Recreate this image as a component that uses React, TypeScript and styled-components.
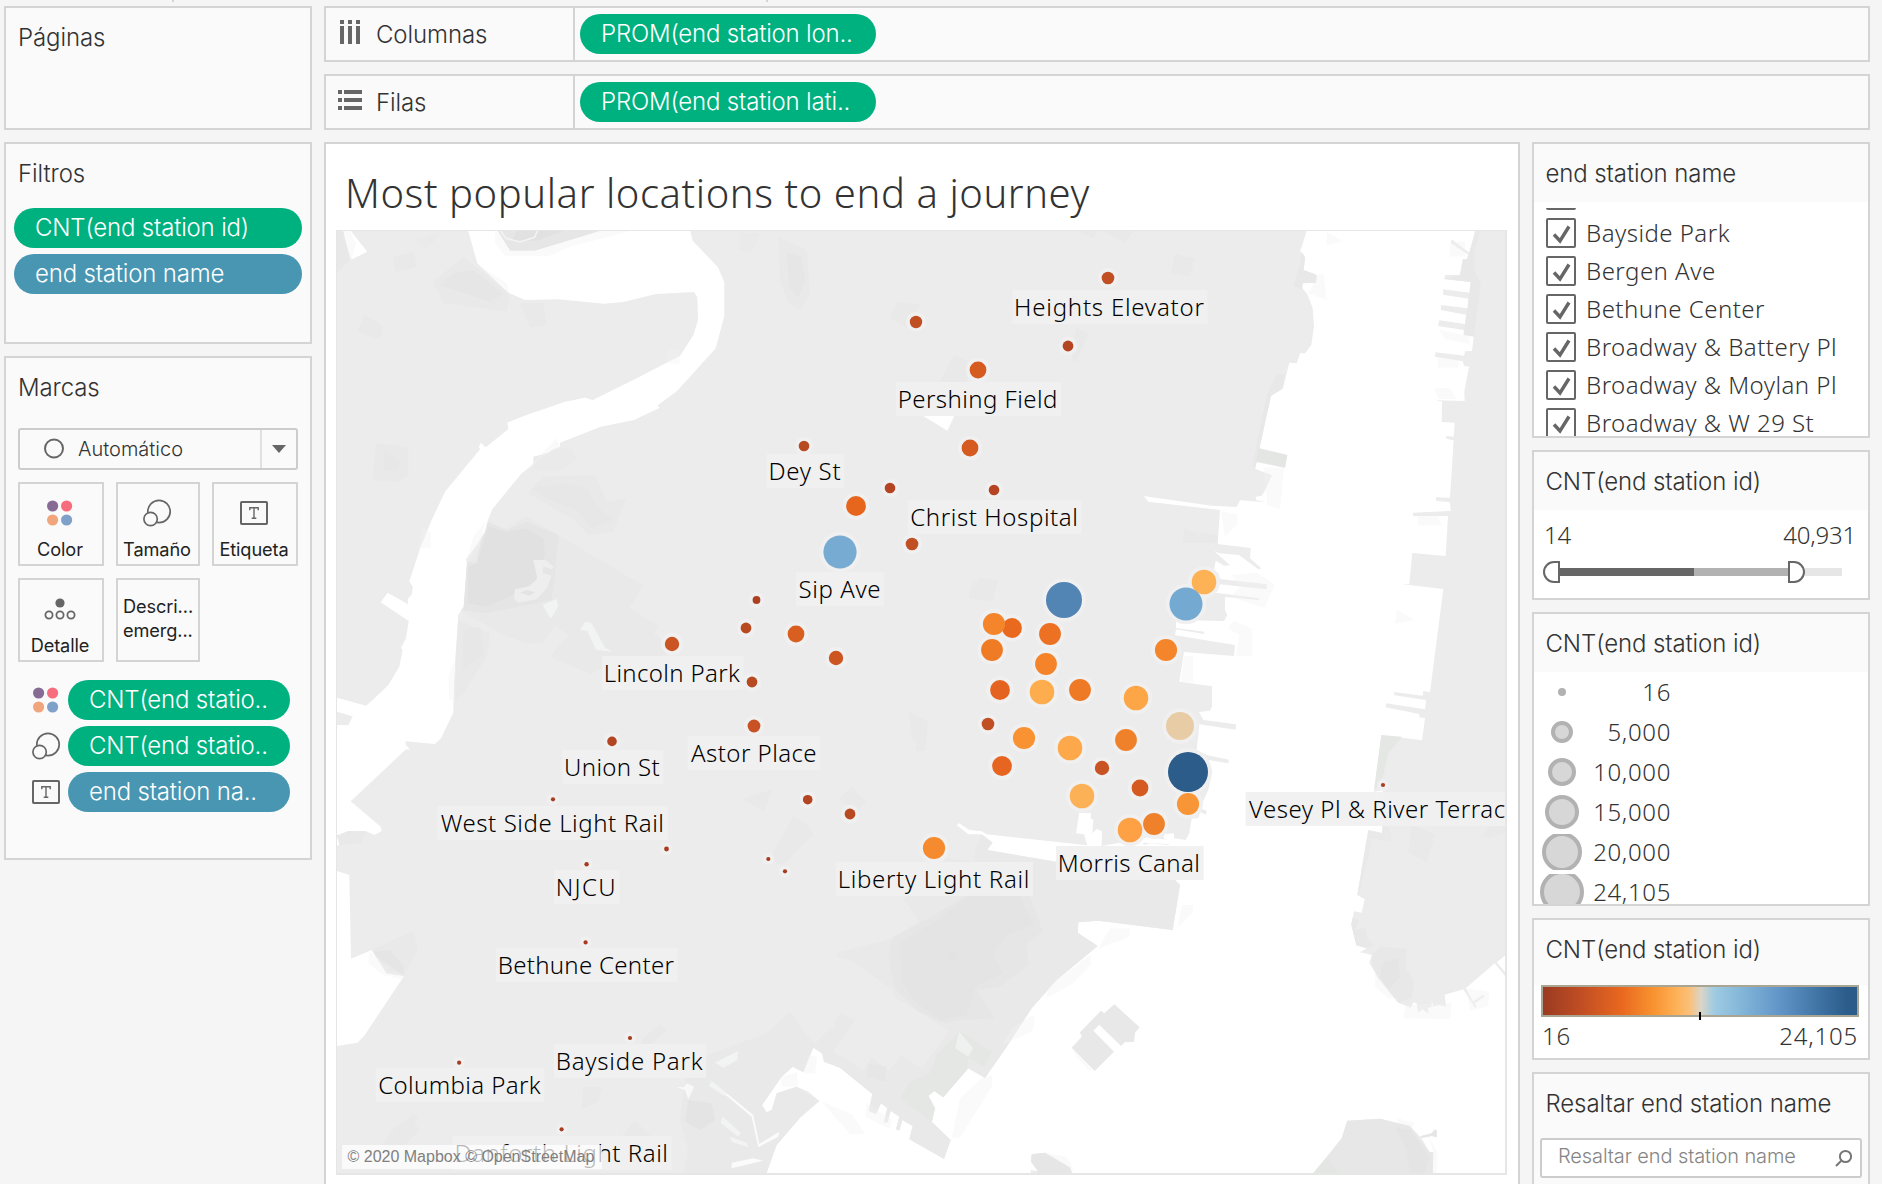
import React from "react";
import styled, { createGlobalStyle, css } from "styled-components";

const UI_FONT = `Inter, "Liberation Sans", sans-serif`;
const VIZ_FONT = `"Noto Sans", "Open Sans", sans-serif`;

const GlobalStyle = createGlobalStyle`
  *, *::before, *::after { box-sizing: border-box; }
  html, body { margin: 0; height: 100%; background: #f5f5f5; overflow: hidden; }
  body { font-family: ${UI_FONT}; font-weight: 350; font-size: 24px; line-height: 30px; color: #333; }
`;

/* ---------- layout ---------- */

const Workspace = styled.div`
  display: grid;
  grid-template-columns: 308px 1546px;
  column-gap: 12px;
  width: 1882px;
  height: 1184px;
  padding: 6px 12px 0 4px;
  overflow: hidden;
  position: relative;
`;

const SideColumn = styled.div`
  display: flex;
  flex-direction: column;
  gap: 12px;
`;

const MainColumn = styled.div`
  display: flex;
  flex-direction: column;
  gap: 12px;
  min-width: 0;
`;

const ContentRow = styled.div`
  display: flex;
  gap: 12px;
`;

const LegendColumn = styled.div`
  display: flex;
  flex-direction: column;
  gap: 12px;
  width: 338px;
`;

const RulerTick = styled.i<{ $x: number }>`
  position: absolute;
  top: 0;
  left: ${(p) => p.$x}px;
  width: 2px;
  height: 2px;
  background: #d4d4d4;
`;

const Card = styled.section<{ $h: number }>`
  flex: none;
  height: ${(p) => p.$h}px;
  border: 2px solid #d4d4d4;
  background: #fafafa;
  overflow: hidden;
`;

const CardTitle = styled.h2<{ $h?: number }>`
  margin: 0;
  height: ${(p) => p.$h ?? 58}px;
  padding: 15px 12px 0;
  font: inherit;
  letter-spacing: -0.1px;
  white-space: nowrap;
`;

const LegendTitle = styled(CardTitle)`
  padding-left: 11.5px;
`;

const LegendBody = styled.div`
  background: #fff;
  height: 100%;
  font-family: ${VIZ_FONT};
  font-weight: 325;
`;

/* ---------- pills ---------- */

const pillTone = { measure: "#00b180", dimension: "#4996b2" };

const Pill = styled.div<{ $tone: keyof typeof pillTone; $w?: number }>`
  height: 40px;
  ${(p) => (p.$w ? css`width: ${p.$w}px;` : css`flex: 1;`)}
  padding: 5px 10px 0 21px;
  border-radius: 20px;
  background: ${(p) => pillTone[p.$tone]};
  color: #fff;
  white-space: nowrap;
  letter-spacing: -0.18px;
`;

const PillStack = styled.div`
  display: flex;
  flex-direction: column;
  gap: 6px;
  padding: 6px 8px 0;
  & > ${Pill} { flex: none; }
`;

/* ---------- shelves ---------- */

const Shelf = styled(Card)`
  display: flex;
`;

const ShelfName = styled.div`
  display: flex;
  width: 249px;
  border-right: 2px solid #d4d4d4;
  padding: 11px 0 0 12px;
  gap: 12px;
  line-height: 32px;
  letter-spacing: -0.1px;
`;

const ShelfDrop = styled.div`
  padding: 6px 5px;
`;

/* ---------- marks card ---------- */

const MarkTypeSelect = styled.div`
  display: flex;
  align-items: stretch;
  width: 280px;
  height: 42px;
  margin: 12px 0 12px 12px;
  border: 2px solid #ccc;
  border-radius: 3px;
  font-size: 20px;
  line-height: 37px;
`;

const MarkTypeValue = styled.span`
  display: flex;
  flex: 1;
  gap: 13px;
  padding-left: 23px;
  align-items: center;
`;

const MarkTypeArrow = styled.span`
  display: flex;
  align-items: center;
  justify-content: center;
  width: 36px;
  border-left: 2px solid #e0e0e0;
`;

const MarkGrid = styled.div`
  display: grid;
  grid-template-columns: 86px 84px 86px;
  grid-auto-rows: 84px;
  gap: 12px;
  padding-left: 12px;
`;

const MarkButton = styled.button<{ $textOnly?: boolean }>`
  display: flex;
  flex-direction: column;
  align-items: center;
  justify-content: ${(p) => (p.$textOnly ? "center" : "flex-end")};
  padding: ${(p) => (p.$textOnly ? "0 0 4px" : "0 2px 3px 0")};
  border: 2px solid #d4d4d4;
  background: transparent;
  font-family: inherit;
  font-weight: 370;
  font-size: 18.2px;
  line-height: 24px;
  letter-spacing: -0.1px;
  text-align: left;
  color: #222;
`;

const MarkGlyph = styled.span`
  display: flex;
  align-items: center;
  justify-content: center;
  height: 42px;
  margin-bottom: 3px;
`;

const EncodingList = styled.div`
  display: flex;
  flex-direction: column;
  gap: 6px;
  padding: 18px 20px 0 22px;
`;

const Encoding = styled.div`
  display: flex;
  align-items: center;
`;

const EncodingIcon = styled.span`
  display: flex;
  justify-content: center;
  width: 36px;
  margin: 0 4px 0 0;
`;

const ColorIcon = () => (
  <svg width="36" height="28" viewBox="0 0 36 28">
    <circle cx="10.6" cy="7" r="5.6" fill="#866b95" />
    <circle cx="24.6" cy="7" r="5.6" fill="#f66e7e" />
    <circle cx="10.6" cy="21" r="5.6" fill="#f0a57d" />
    <circle cx="24.6" cy="21" r="5.6" fill="#7fa1c9" />
  </svg>
);

const SizeIcon = () => (
  <svg width="30" height="28" viewBox="0 0 30 28" fill="#fafafa" stroke="#666" strokeWidth="1.7">
    <circle cx="17" cy="12.5" r="11.2" />
    <circle cx="8.6" cy="20" r="6.7" />
  </svg>
);

const LabelIcon = () => (
  <svg width="28" height="24" viewBox="0 0 28 24" fill="none" stroke="#666" strokeWidth="2">
    <rect x="1" y="1" width="26" height="22" rx="0.8" />
    <path d="M9.8 9.2V6.8h8.4v2.4M14 6.8v10.4M11.7 17.2h4.6" strokeWidth="1.4" />
  </svg>
);

const DetailIcon = () => (
  <svg width="32" height="22" viewBox="0 0 32 22" fill="none" stroke="#666" strokeWidth="1.8">
    <circle cx="16" cy="5" r="4.6" fill="#666" stroke="none" />
    <circle cx="5" cy="17" r="3.6" />
    <circle cx="16" cy="17" r="3.6" />
    <circle cx="27" cy="17" r="3.6" />
  </svg>
);

const ColumnsIcon = () => (
  <svg width="26" height="30" viewBox="0 0 26 30" fill="#666">
    {[2, 10, 18].map((x) => (
      <path key={x} d={`M${x} 1h4v4h-4zM${x} 7h4v18h-4z`} />
    ))}
  </svg>
);

const RowsIcon = () => (
  <svg width="26" height="30" viewBox="0 0 26 30" fill="#666">
    {[3, 11, 19].map((y) => (
      <path key={y} d={`M0 ${y}h4v4h-4zM6 ${y}h18v4h-18z`} />
    ))}
  </svg>
);

/* ---------- filter list ---------- */

const CheckViewport = styled(LegendBody)`
  padding-top: 6px;
`;

const CheckScroller = styled.ul`
  display: flex;
  flex-direction: column;
  gap: 8px;
  margin: 0;
  padding: 0 0 0 12px;
  list-style: none;
  height: 228px;
  overflow: hidden;
  justify-content: flex-start;
`;

/* Lower edge of the checkbox that is scrolled out above the list. */
const ScrolledEdge = styled.li`
  flex: none;
  width: 30px;
  height: 2px;
  background: #666;
  border-radius: 0 0 2px 2px;
`;

const CheckRow = styled.li`
  display: flex;
  flex: none;
  gap: 10px;
  height: 30px;
  white-space: nowrap;
  letter-spacing: 0.47px;
  line-height: 29px;
`;

const CheckBox = styled.span`
  width: 30px;
  height: 30px;
  border: 2px solid #666;
  border-radius: 2px;
  background: #fff;
  & > svg { display: block; }
`;

/* ---------- range filter ---------- */

const RangeLabels = styled.div<{ $pad: string; $ls: number }>`
  display: flex;
  justify-content: space-between;
  padding: ${(p) => p.$pad};
  letter-spacing: ${(p) => p.$ls}px;
`;

const Slider = styled.div`
  display: flex;
  align-items: center;
  margin: 10px 0 0 9px;
  height: 24px;
`;

const Track = styled.span<{ $w: number; $c: string }>`
  width: ${(p) => p.$w}px;
  height: 8px;
  background: ${(p) => p.$c};
`;

const Thumb = styled.span<{ $side: "l" | "r" }>`
  width: 17px;
  height: 22px;
  border: 2px solid #666;
  background: #fff;
  border-radius: ${(p) => (p.$side === "l" ? "11px 0 0 11px" : "0 11px 11px 0")};
`;

/* ---------- size legend ---------- */

const SizeRow = styled.div`
  display: flex;
  height: 36px;
  margin-bottom: 4px;
  line-height: 39px;
  letter-spacing: 0.65px;
`;

const SizeSwatch = styled.svg`
  width: 56px;
  height: 36px;
  margin-top: 2px;
  flex: none;
`;

const SizeValue = styled.span`
  width: 81px;
  text-align: right;
`;

/* ---------- colour legend ---------- */

const ColorRamp = styled.div`
  position: relative;
  height: 32px;
  margin: 0 9px 0 7px;
  border: 2px solid #aaa593;
  background: linear-gradient(90deg, #9a3b22 0%, #c04d23 12%, #e9681f 25%, #f8922f 35%, #fdaf55 42%, #fbbf77 46.5%, #d9d5c9 50.5%, #9fcbe2 54.5%, #87b9da 62%, #6296c8 75%, #3f73a4 88%, #2b5c8a 97%);
`;

const RampCenter = styled.i`
  position: absolute;
  left: 156px;
  top: 25px;
  width: 2px;
  height: 8px;
  background: #000;
`;

/* ---------- highlighter ---------- */

const SearchField = styled.div`
  display: flex;
  align-items: center;
  justify-content: space-between;
  width: 322px;
  height: 40px;
  margin: 6px 0 0 6px;
  padding: 0 7px 4px 16px;
  border: 2px solid #ccc;
  border-radius: 3px;
  background: #fff;
  color: #858585;
  font-size: 20px;
  letter-spacing: -0.1px;
  & > svg { margin-top: 4px; }
`;

/* ---------- sheet ---------- */

const Sheet = styled.section`
  flex: none;
  width: 1196px;
  height: 1100px;
  border: 2px solid #d4d4d4;
  background: #fff;
  padding: 18px 10px 0;
`;

const SheetTitle = styled.h1`
  margin: 0;
  height: 68px;
  padding-left: 9px;
  font-family: ${VIZ_FONT};
  font-weight: 310;
  font-size: 40px;
  line-height: 61px;
  letter-spacing: 0.57px;
  white-space: nowrap;
`;

const MapFrame = styled.div`
  position: relative;
  width: 1171px;
  height: 945px;
  border: solid #e6e6e6;
  border-width: 1px 2px 2px 1px;
  overflow: hidden;
`;

const MapSvg = styled.svg`
  display: block;
  width: 1168px;
  height: 942px;
`;

const MapLabel = styled.text`
  font-family: ${VIZ_FONT};
  font-weight: 350;
  font-size: 24px;
  fill: #000;
`;

const Attribution = styled.div`
  position: absolute;
  left: 5px;
  bottom: 4px;
  width: 260px;
  height: 24px;
  padding-left: 5.5px;
  background: rgba(255, 255, 255, 0.72);
  color: #808080;
  font: 16px/24px "Liberation Sans", Arial, sans-serif;
  white-space: nowrap;
`;

/* ---------- map geometry ---------- */

/* Outlines are stored per map tile in thirds of a pixel; `at` moves them onto the sheet. */
const at = (x: number, y: number) => (pts: string) =>
  pts
    .trim()
    .split(/\s+/)
    .map((p) => {
      const [a, b] = p.split(",").map(Number);
      return `${(x + a / 3).toFixed(1)},${(y + b / 3).toFixed(1)}`;
    })
    .join(" ");

const nw = at(330, 220);
const sw = at(330, 690);
const n = at(800, 220);
const ne = at(1150, 220);
const s = at(800, 690);
const se = at(1150, 690);

const water: string[] = [
  [
    nw("415,20 415,33 442,130 535,218 585,240 685,238 822,251 880,246 978,222 1092,216 1102,232 1104,300 1090,346 1050,407 920,475 788,540 765,533 705,545 575,590 532,608 535,628 467,682 453,668 446,680 450,688 345,815 305,900 272,980 238,1084 248,1100 246,1122 233,1137 234,1153 173,1118 152,1147 236,1203 228,1255 213,1284 218,1290 208,1340 175,1395 128,1440"),
    sw("108,47 0,17 0,58 20,65 68,79 55,106 0,104 0,470 28,465 22,440 55,423 107,423 133,435 155,423 152,410 62,334 228,178 240,180 226,162 228,154 315,162 333,145 370,68 371,0"),
    nw("375,1330 385,1184 402,1160 411,1030 408,1018 440,975 465,935 472,905 487,868 573,762 665,690 690,680 690,668 812,620 912,600 988,564 983,556 1042,512 1157,385 1183,288 1183,187 1164,142 1088,62 1078,20"),
  ].join(" "),
  sw("0,540 20,543 58,555 63,806 125,780 170,850 222,858 103,1037 82,1058 20,1068 0,1068"),
  nw("60,30 112,95 64,119 36,30"),
  n("370,588 463,588 442,632"),
  [
    ne("473,20 470,33 455,80 450,93 465,112 461,150 500,165 498,188 458,190 456,203 472,222 488,265 492,320 484,375 465,400 450,400 440,430 418,428 398,506 385,506 363,528 328,685 412,705 405,743 320,727 315,746 366,766 343,815 335,827 318,830 318,840 350,847 270,841 260,861 185,857 0,831"),
    n("1032,828 1045,845"),
    ne("210,870 203,972 302,984 300,1015 334,1045 325,1048 267,1005 208,1000 192,993 240,1036 222,1037 197,1022 192,1050 205,1060 210,1077 351,1093 350,1108 205,1092 197,1118 328,1135 326,1140 225,1131 225,1170 232,1186 222,1203 90,1200 78,1205 78,1224 162,1235 162,1242 78,1228 75,1246 255,1275 252,1308 102,1296 88,1385 186,1399 186,1410"),
    se("186,50 180,62 147,66 160,90 258,103 257,119 148,103 140,180 170,195 236,209 235,220 175,210 187,245 175,300 150,355 170,362 167,374 150,366 145,384 125,386 118,430 107,450 72,445 72,430 45,432 40,443 58,452 55,465 0,460"),
    s("1030,465 1030,458 1105,462 1108,450 1045,442 905,468 906,424 890,417 877,430 880,390 872,385 873,370 838,368 828,430 852,433 862,466 560,433 545,424 508,420 478,400 470,405 505,433 545,433 578,458 562,465 562,480 768,515 1125,570 1140,585 1118,720 895,692 835,697 833,728 893,768 770,870 695,955 620,1070 555,1164 505,1135 430,1222 403,1203 385,1217 405,1255 395,1295 452,1350 432,1407 328,1348 338,1308 307,1290 298,1322 288,1318 298,1280 272,1262 262,1298 252,1296 262,1255 243,1240 228,1273 206,1262 217,1212 120,1133 72,1115 66,1090 40,1073 10,1147"),
    sw("1420,1147 1388,1130 1355,1160 1296,1245 1297,1260 1310,1267 1325,1260 1340,1210 1400,1190 1435,1205 1468,1233 1410,1283 1340,1365 1315,1420 1310,1449 1310,1480"),
    s("692,1480 692,1440 713,1443 693,1415 695,1393 735,1388 810,1432 820,1455 820,1480"),
    se("470,1480 490,1449 575,1345 592,1292 690,1286 780,1308 810,1340 845,1330 855,1318 861,1324 860,1342 845,1338 814,1344 838,1385 850,1387 848,1480 1090,1480 1090,780 1065,797 1040,817 1068,850 1065,858 1034,820 947,895 970,934 1000,914 1003,920 974,940 980,950 975,953 940,898 884,914 888,950 865,945 850,950 845,932 845,950 833,955 836,972 818,958 803,968 800,940 790,937 783,953 745,938 685,865 658,818 665,795 630,787 650,775 619,766 604,705 612,664 635,668 644,627 622,615 655,421 696,429 698,408 698,300 672,306 694,135 816,151 825,85 808,82 808,72 707,52 708,40 825,58 828,30 733,16 733,6 818,17 820,3 840,7"),
    ne("880,1107 758,1093 778,1092 787,999 887,1008 894,888 789,888 789,878 902,873 900,847 858,842 858,832 900,833 911,661 889,656 888,648 911,650 914,608 875,606 876,545 858,541 944,543 943,515 957,440 942,437 938,424 854,410 857,397 943,407 945,394 966,393 971,350 940,345 942,330 864,318 868,301 945,312 948,284 872,270 873,255 954,265 956,236 879,224 880,208 960,218 962,186 883,178 885,165 930,165 938,117 950,118 955,104 903,70 905,58 958,98 975,33 978,20"),
  ].join(" "),
];

/* Parks and cemeteries, slightly darker than the base land tone. */
const parks: [string, string][] = [
  ["#e9e9e9", nw("475,905 530,928 565,905 588,888 942,1098 898,1164 987,1218 972,1240 1040,1300 820,1340 783,1362 660,1310 716,1244 675,1218 640,1265 595,1272 520,1245 392,1172 408,1150 411,1030 465,935")],
  ["#e5e5e5", nw("475,908 530,930 590,905 685,945 675,1060 665,1140 470,1180 400,1170 411,1030 440,1000")],
  ["#e1e1e1", nw("475,920 530,935 590,925 640,955 645,1000 620,1080 560,1120 470,1160 415,1150 415,1040 440,1030")],
  ["#e9e9e9", nw("595,820 640,770 795,765 830,845 888,835 850,935 775,945 740,905")],
  ["#e7e7e7", nw("605,805 700,790 770,800 800,860 850,900 785,925 740,870 660,840")],
  ["#e9e9e9", nw("310,185 400,112 450,150 540,225 530,275 440,262 340,250")],
  ["#e6e6e6", nw("330,195 370,160 430,150 520,222 480,245 420,225")],
  ["#e9e9e9", nw("570,250 640,250 650,315 600,322")],
  ["#e9e9e9", nw("82,335 105,285 160,318 150,357")],
  ["#e9e9e9", nw("138,670 235,682 235,765 205,785 128,783")],
  ["#e7e7e7", nw("165,695 215,725 200,755 160,750")],
  ["#e9e9e9", nw("190,112 250,95 260,140 195,155")],
  ["#eaeaea", nw("250,60 340,33 290,90")],
  ["#e8e8e8", nw("20,33 40,33 60,120 20,160")],
  ["#e9e9e9", nw("1345,50 1430,90 1440,220 1410,270 1375,250 1350,180")],
  ["#e6e6e6", nw("1370,100 1415,110 1425,180 1405,235 1378,200")],
  ["#eaeaea", nw("1230,40 1290,40 1265,98 1228,88")],
  ["#e9e9e9", nw("385,1200 480,1240 470,1310 400,1420 375,1440 378,1300")],
  ["#e7e7e7", nw("400,1230 450,1220 460,1300 400,1350")],
  ["#eaeaea", nw("610,710 720,680 742,720 690,750 610,750")],
  ["#e9e9e9", n("830,33 890,33 880,55")],
  ["#e9e9e9", n("905,33 1003,33 975,66")],
  ["#e9e9e9", n("1125,102 1184,115 1170,170 1113,157")],
  ["#e9e9e9", n("290,246 360,252 325,325 270,295")],
  ["#e9e9e9", n("462,405 510,425 500,486 418,486")],
  ["#e9e9e9", n("828,323 866,340 830,425 815,420")],
  ["#e9e9e9", n("540,1075 595,1081 578,1144 506,1135 515,1095")],
  ["#e9e9e9", ne("103,925 140,940 150,950 155,940 203,946 203,970 98,968")],
  ["#e8e8e8", ne("455,95 465,112 461,150 500,165 498,188 458,190 456,210 430,197 452,125")],
  ["#e8e8e8", ne("380,460 405,465 398,506 363,528 315,746 307,740 350,525")],
  ["#e4e6e4", ne("326,685 412,705 405,743 318,724")],
  ["#e8e8e8", ne("978,33 990,33 972,100 975,155 992,190 972,348 942,344 962,186 883,176 930,165 940,117 952,117")],
  ["#e9e9e9", s("325,66 385,95 375,184 348,182 350,152 338,148")],
  ["#e9e9e9", s("155,290 198,335 170,365 115,327")],
  ["#e9e9e9", s("0,395 42,433 0,472")],
  ["#e9e9e9", sw("1237,327 1328,297 1302,365")],
  ["#e9e9e9", sw("1390,378 1440,410 1440,440 1358,525 1318,510")],
  ["#e9e9e9", sw("125,780 250,722 264,775 222,858 170,850")],
  ["#e5e5e5", sw("130,785 180,780 222,830 218,852 175,845")],
  ["#e9e9e9", sw("20,436 55,423 107,423 95,460 30,465")],
  ["#e9e9e9", sw("935,1048 990,1002 1012,1022 940,1080")],
  ["#e9e9e9", sw("250,1272 265,1283 252,1295 267,1320 225,1365 155,1365 190,1318")],
  ["#e9e9e9", sw("760,1190 815,1190 805,1235 755,1258")],
  ["#e9e9e9", sw("915,1292 965,1340 875,1338")],
  ["#e9e9e9", sw("1120,1100 1310,1030 1380,965 1418,1020 1450,1073 1420,1147 1388,1130 1355,1160 1296,1245 1310,1267 1325,1260 1340,1210 1400,1190 1468,1233 1410,1283 1340,1365 1310,1449 1060,1449 1075,1380 1050,1290 1065,1170")],
  ["#e4e4e4", sw("1075,1230 1145,1240 1155,1290 1110,1320 1065,1295")],
  ["#e9e9e9", s("545,433 578,458 562,480 768,515 1125,570 1140,585 1118,720 895,692 835,697 833,728 893,768 770,870 695,955 620,1070 555,1164 505,1135 430,1222 403,1203 385,1217 405,1255 395,1295 452,1350 432,1407 328,1348 338,1308 307,1290 298,1322 288,1318 298,1280 272,1262 262,1298 252,1296 262,1255 243,1240 228,1273 206,1262 217,1212 120,1133 72,1115 66,1090 40,1073 8,1022 45,1060 90,1015 105,1015 105,990 120,970 165,990 100,1085 120,1105 125,1097 190,1142 215,1102 265,1142 305,1097 365,1135 448,1023 275,915 285,905 150,810 105,800 118,785 270,748 358,695 310,628 440,505 523,515 525,480")],
  ["#e6e6e6", s("275,745 420,665 510,610 690,618 728,725 680,760 685,825 600,890 530,900 585,985 490,990 430,998 350,960 285,895 265,800")],
  ["#e4e4e4", s("300,760 420,685 500,620 660,618 700,705 620,735 580,790 610,850 525,890 500,975 420,990 340,930 305,870")],
  ["#e2e2e2", s("445,783 468,783 468,808 445,808")],
  ["#e4e7e4", s("480,1023 575,1085 555,1130 505,1105 500,1140 430,1222 403,1203 385,1217 405,1255 395,1295 300,1225 330,1175 390,1150 410,1095")],
  ["#eef1ef", s("478,1025 520,1075 505,1100 465,1075")],
  ["#e6e6e6", s("205,1120 260,1130 255,1175 200,1160")],
  ["#f2f4f3", nw("765,1205 785,1210 825,1283 850,1295 798,1290 772,1232 750,1230")],
  ["#eeeeee", nw("610,1020 645,1020 672,1040 665,1048 640,1040 638,1058 665,1068 650,1105 620,1138 565,1148 552,1138 555,1108 600,1098 622,1075")],
  ["#e3e3e3", nw("570,1118 590,1110 615,1116 600,1127")],
  ["#f2f4f3", nw("680,1137 684,1160 662,1197 638,1155")],
  ["#f2f4f3", sw("1224,1083 1222,1110 1180,1133 1155,1118")],
  ["#f2f4f3", sw("1145,1172 1190,1210 1185,1218 1137,1188")],
  ["#f2f4f3", sw("1178,1280 1232,1328 1225,1340 1172,1298")],
  ["#f2f4f3", sw("1200,1340 1250,1358 1255,1372 1205,1355")],
  ["#f8f8f8", sw("1037,1190 1062,1192 1070,1180 1093,1190 1075,1228 1065,1200")],
  ["#fbfbfb", sw("1190,1210 1270,1275 1288,1362 1348,1325 1345,1340 1285,1372 1265,1280 1187,1215")],
  ["#fbfbfb", sw("1205,1418 1270,1405 1300,1412 1205,1435")],
  ["#e5e7e5", se("694,135 755,140 714,193 696,272 672,300")],
  ["#e9e9e9", se("785,405 855,433 830,518 775,485")],
  ["#e9e9e9", se("698,408 715,408 725,440 716,456 665,445 655,500 640,560 628,615 622,615 655,421 696,429")],
  ["#e9e9e9", se("1020,408 1065,405 1065,430 1015,445 1000,435")],
  ["#e8e8e8", se("607,685 628,690 615,720 645,712 652,745 672,765 650,775 619,766 604,705")],
  ["#e8e8e8", se("690,770 770,776 768,835 792,873 785,922 745,938 685,865 665,820 668,795")],
  ["#e5e5e5", se("700,815 745,805 750,860 715,900 690,860")],
  ["#e7e7e7", se("575,1345 592,1292 690,1286 780,1308 838,1385 850,1387 848,1480 470,1480")],
  ["#e4e4e4", se("735,1310 780,1320 838,1400 825,1449 780,1449 770,1380")],
  ["#e4e6e4", se("528,1405 562,1440 560,1460 480,1460")],
  ["#e6e6e6", se("812,1338 845,1330 855,1318 861,1324 860,1342 845,1338 814,1344")],
  ["#e6e6e6", s("695,1393 735,1388 810,1432 820,1480 705,1480 713,1443 693,1415")],
  ["#e6e6e6", nw("503,33 810,33 615,92 540,92")],
  ["#e1e1e1", nw("560,33 700,33 620,62 545,60")],
];

/* Pale shoals drawn on top of open water. */
const shoals: string[] = [
  nw("495,33 503,33 540,92 612,92 810,33 900,33 720,80 655,109 527,109 495,72"),
  nw("280,920 302,935 302,985 265,985"),
  nw("465,905 440,1030 408,1025 430,950"),
  nw("455,140 530,190 540,222 530,215"),
  nw("575,762 680,655 690,680 665,690"),
  nw("1015,385 1050,390 1048,432 1010,430"),
  nw("40,33 60,33 78,70 64,119 56,90"),
  nw("355,1375 372,1320 370,1440 358,1440"),
  ne("530,36 578,64 530,77"),
  ne("505,165 520,160 530,240 475,220"),
  ne("340,742 402,745 390,868 352,855"),
  ne("212,872 262,882 260,915 225,948"),
  ne("245,1065 320,1058 375,1095 342,1163 240,1130 270,1100"),
  ne("250,1203 305,1225 305,1308 258,1308 268,1245 235,1225"),
  ne("103,1308 130,1308 130,1388 92,1385"),
  ne("900,65 945,65 945,110 900,110"),
  ne("865,328 960,350 957,372 885,358"),
  ne("863,413 925,420 925,443 863,443"),
  ne("852,503 900,505 920,537 865,537"),
  ne("803,888 865,888 875,917 803,917"),
  ne("740,1168 792,1200 735,1212"),
  se("95,645 130,645 128,668 83,712"),
  se("675,845 745,938 745,925 715,925 675,890"),
  se("768,945 905,938 900,987 760,985"),
  se("950,895 1017,905 1015,950 960,962"),
  se("740,1285 792,1297 790,1312 745,1300"),
  se("838,1340 863,1390 860,1449 850,1449 850,1387"),
  s("930,715 990,715 988,740 893,778"),
  s("870,795 875,820 820,880 740,925 745,890"),
  s("700,975 705,990 695,1025 605,1065 640,1010"),
  s("545,1165 577,1155 575,1190 480,1343 455,1343 480,1225"),
  s("200,1238 275,1290 270,1318 198,1280"),
  s("65,1235 155,1272 195,1332 150,1332"),
  s("25,1095 52,1100 45,1150 10,1150"),
  s("690,1380 800,1400 825,1445 735,1388"),
  s("820,1080 880,1143 865,1140 825,1095"),
  sw("118,785 222,858 215,868 160,855 115,820"),
  sw("1355,1160 1400,1145 1405,1190 1355,1190"),
];

const islands: string[] = [
  s("943,943 1019,1012 1005,1028 1002,1056 975,1056 963,1068 898,1004 880,1022 942,1085 884,1143 815,1073 845,1040 840,1027 903,962 913,970"),
];

type Mark = [cx: number, cy: number, r: number, fill: string];

const marks: Mark[] = [
  [1108, 278, 6.3, "#c14f24"], [916, 322, 6.2, "#c14f24"], [1068, 346, 5.4, "#b54522"],
  [978, 370, 8.4, "#d65b20"], [970, 448, 8.4, "#d65b20"], [804, 446, 5.3, "#b84a22"],
  [890, 488, 5.3, "#b54522"], [994, 490, 5.3, "#b54522"], [856, 506, 9.9, "#e7661e"],
  [840, 552, 16.6, "#77abd2"], [912, 544, 6.3, "#c14f24"], [1064, 600, 18, "#5284b4"],
  [1204, 582, 12.3, "#feb256"], [1186, 604, 16.5, "#74a9d1"], [1012, 628, 9.9, "#e96a1f"],
  [994, 624, 11.1, "#f4852a"], [1050, 634, 10.9, "#ed7122"], [1166, 650, 11.1, "#f5852b"],
  [992, 650, 10.9, "#f07b25"], [1046, 664, 10.9, "#f4832a"], [796, 634, 8.4, "#d95f20"],
  [836, 658, 7.2, "#cd5521"], [756.5, 600, 3.9, "#ac4122"], [746, 628, 5.4, "#b84a22"],
  [672, 644, 7.2, "#ca5423"], [752, 682, 5.4, "#b84a22"], [1000, 690, 9.9, "#e46320"],
  [1042, 692, 12.3, "#fdac4e"], [1080, 690, 10.9, "#ee7a25"], [1136, 698, 12.3, "#fda647"],
  [988, 724, 6.3, "#c14f24"], [1024, 738, 11.1, "#f89233"], [1070, 748, 12.3, "#fda84a"],
  [1126, 740, 10.9, "#f0812b"], [1180, 726, 14, "#e8cca6"], [1102, 768, 7.2, "#c95423"],
  [1002, 766, 9.9, "#e66521"], [1082, 796, 12.3, "#fdb157"], [1140, 788, 8.4, "#d55a21"],
  [1188, 804, 11.1, "#f89536"], [1188, 772, 20, "#2b5c8a"], [1154, 824, 10.9, "#f0812b"],
  [1130, 830, 12.3, "#fda144"], [934, 848, 11.1, "#f58a2e"], [850, 814, 5.4, "#b84a22"],
  [807.7, 799.7, 4.8, "#b34622"], [754, 726, 6.4, "#c95224"], [612, 741.4, 4.8, "#b34622"],
  [553, 799.3, 2.1, "#a83c22"], [666.5, 849, 2.4, "#a83c22"], [586.6, 864.3, 2.2, "#a83c22"],
  [585.6, 942.4, 2.1, "#a83c22"], [630, 1038, 2.1, "#a83c22"], [459.1, 1062.7, 2.1, "#a83c22"],
  [561.6, 1129.3, 2.1, "#a83c22"], [768.3, 859, 2.1, "#a83c22"], [785, 871.3, 2.1, "#a83c22"],
  [1383, 785, 2.1, "#a83c22"],
];

type PlaceLabel = [text: string, left: number, right: number, baseline: number];

const labels: PlaceLabel[] = [
  ["Heights Elevator", 1015.7, 1203.3, 316],
  ["Pershing Field", 899.3, 1056.7, 408],
  ["Dey St", 770, 840, 480],
  ["Christ Hospital", 911, 1077.3, 526],
  ["Sip Ave", 799.3, 880, 598],
  ["Lincoln Park", 605.3, 739.3, 682],
  ["Union St", 565.7, 659, 776],
  ["Astor Place", 691, 816, 762],
  ["West Side Light Rail", 440.7, 663.3, 832],
  ["NJCU", 557.3, 615, 896],
  ["Bethune Center", 499.3, 673.3, 974],
  ["Bayside Park", 557.3, 702, 1070],
  ["Columbia Park", 379, 540, 1094],
  ["Danforth Light Rail", 456, 667.3, 1162],
  ["Liberty Light Rail", 839.3, 1028.7, 888],
  ["Morris Canal", 1059.3, 1199.3, 872],
  ["Vesey Pl & River Terrac", 1249, 1504.5, 818],
];

/* Leading side bearing differs between slanted, open and straight capitals. */
const bearing = (text: string) => (/^[AWV]/.test(text) ? 0 : /^[CS]/.test(text) ? 0.8 : 1.6);

const StationMap = () => (
  <MapSvg viewBox="337 231 1168 942">
    <rect x="337" y="231" width="1168" height="942" fill="#ececec" />
    {water.map((pts, i) => (
      <polygon key={i} points={pts} fill="#fff" />
    ))}
    {parks.map(([fill, pts], i) => (
      <polygon key={i} points={pts} fill={fill} />
    ))}
    {shoals.map((pts, i) => (
      <polygon key={i} points={pts} fill="#f2f2f2" opacity="0.38" />
    ))}
    {islands.map((pts, i) => (
      <polygon key={i} points={pts} fill="#e8e8e8" />
    ))}
    <polyline points={nw("512,33 528,55 570,66 614,52 622,33")} fill="none" stroke="#f3f3f3" strokeWidth="1.6" />
    {labels.map(([text, l, r, b]) => (
      <rect key={text} x={l - 3.3} y={b - 26} width={r - l + 7.6} height="34" fill="#f0f0f0" fillOpacity="0.92" />
    ))}
    {marks.map(([cx, cy, r], i) => (
      <circle key={i} cx={cx} cy={cy} r={r + 3.8} fill="#f0f0f0" />
    ))}
    {marks.map(([cx, cy, r, fill], i) => (
      <circle key={i} cx={cx} cy={cy} r={r} fill={fill} />
    ))}
    {labels.map(([text, l, r, b]) => (
      <MapLabel
        key={text}
        x={l - bearing(text)}
        y={b}
        textLength={r - l + bearing(text) + 0.6}
        lengthAdjust="spacing"
      >
        {text}
      </MapLabel>
    ))}
  </MapSvg>
);

/* ---------- data ---------- */

const stations = [
  "Bayside Park",
  "Bergen Ave",
  "Bethune Center",
  "Broadway & Battery Pl",
  "Broadway & Moylan Pl",
  "Broadway & W 29 St",
];

const sizes: [string, number][] = [
  ["16", 4],
  ["5,000", 11],
  ["10,000", 14],
  ["15,000", 17],
  ["20,000", 20],
  ["24,105", 22],
];

export default function App() {
  return (
    <>
      <GlobalStyle />
      <Workspace>
        <RulerTick $x={172} />
        <RulerTick $x={766} />
        <SideColumn>
          <Card $h={124}>
            <CardTitle>Páginas</CardTitle>
          </Card>
          <Card $h={202}>
            <CardTitle>Filtros</CardTitle>
            <PillStack>
              <Pill $tone="measure" $w={288}>CNT(end station id)</Pill>
              <Pill $tone="dimension" $w={288}>end station name</Pill>
            </PillStack>
          </Card>
          <Card $h={504}>
            <CardTitle>Marcas</CardTitle>
            <MarkTypeSelect>
              <MarkTypeValue>
                <svg width="22" height="22" viewBox="0 0 22 22">
                  <circle cx="11" cy="10.5" r="9" fill="none" stroke="#666" strokeWidth="2" />
                </svg>
                Automático
              </MarkTypeValue>
              <MarkTypeArrow>
                <svg width="14" height="8" viewBox="0 0 14 8">
                  <path d="M0 0h14L7 8z" fill="#666" />
                </svg>
              </MarkTypeArrow>
            </MarkTypeSelect>
            <MarkGrid>
              <MarkButton><MarkGlyph><ColorIcon /></MarkGlyph>Color</MarkButton>
              <MarkButton><MarkGlyph><SizeIcon /></MarkGlyph>Tamaño</MarkButton>
              <MarkButton><MarkGlyph><LabelIcon /></MarkGlyph>Etiqueta</MarkButton>
              <MarkButton><MarkGlyph><DetailIcon /></MarkGlyph>Detalle</MarkButton>
              <MarkButton $textOnly>
                <span>Descri...<br />emerg...</span>
              </MarkButton>
            </MarkGrid>
            <EncodingList>
              <Encoding>
                <EncodingIcon><ColorIcon /></EncodingIcon>
                <Pill $tone="measure">CNT(end statio..</Pill>
              </Encoding>
              <Encoding>
                <EncodingIcon><SizeIcon /></EncodingIcon>
                <Pill $tone="measure">CNT(end statio..</Pill>
              </Encoding>
              <Encoding>
                <EncodingIcon><LabelIcon /></EncodingIcon>
                <Pill $tone="dimension">end station na..</Pill>
              </Encoding>
            </EncodingList>
          </Card>
        </SideColumn>

        <MainColumn>
          <Shelf $h={56}>
            <ShelfName><ColumnsIcon />Columnas</ShelfName>
            <ShelfDrop>
              <Pill $tone="measure" $w={296}>PROM(end station lon..</Pill>
            </ShelfDrop>
          </Shelf>
          <Shelf $h={56}>
            <ShelfName><RowsIcon />Filas</ShelfName>
            <ShelfDrop>
              <Pill $tone="measure" $w={296}>PROM(end station lati..</Pill>
            </ShelfDrop>
          </Shelf>
          <ContentRow>
            <Sheet>
              <SheetTitle>Most popular locations to end a journey</SheetTitle>
              <MapFrame>
                <StationMap />
                <Attribution>© 2020 Mapbox © OpenStreetMap</Attribution>
              </MapFrame>
            </Sheet>

            <LegendColumn>
              <Card $h={296}>
                <LegendTitle>end station name</LegendTitle>
                <CheckViewport>
                  <CheckScroller>
                    <ScrolledEdge />
                    {stations.map((name) => (
                      <CheckRow key={name}>
                        <CheckBox>
                          <svg width="26" height="26" viewBox="0 0 26 26">
                            <path d="M6 14.5l6 6.5L21 6.5" fill="none" stroke="#666" strokeWidth="3.4" />
                          </svg>
                        </CheckBox>
                        {name}
                      </CheckRow>
                    ))}
                  </CheckScroller>
                </CheckViewport>
              </Card>

              <Card $h={150}>
                <LegendTitle>CNT(end station id)</LegendTitle>
                <LegendBody>
                  <RangeLabels $pad="10px 12px 0 10px" $ls={-0.2}>
                    <span>14</span>
                    <span>40,931</span>
                  </RangeLabels>
                  <Slider>
                    <Thumb $side="l" />
                    <Track $w={134} $c="#666" />
                    <Track $w={94} $c="#b2b2b2" />
                    <Thumb $side="r" />
                    <Track $w={37} $c="#e6e6e6" />
                  </Slider>
                </LegendBody>
              </Card>

              <Card $h={294}>
                <LegendTitle>CNT(end station id)</LegendTitle>
                <LegendBody>
                  {sizes.map(([value, r]) => (
                    <SizeRow key={value}>
                      <SizeSwatch viewBox="0 0 56 36">
                        <circle
                          cx="28"
                          cy="18"
                          r={r > 4 ? r - 2 : r}
                          fill={r > 4 ? "#d7d7d7" : "#b2b2b2"}
                          stroke={r > 4 ? "#b2b2b2" : "none"}
                          strokeWidth="4"
                        />
                      </SizeSwatch>
                      <SizeValue>{value}</SizeValue>
                    </SizeRow>
                  ))}
                </LegendBody>
              </Card>

              <Card $h={142}>
                <LegendTitle $h={65}>CNT(end station id)</LegendTitle>
                <LegendBody>
                  <ColorRamp>
                    <RampCenter />
                  </ColorRamp>
                  <RangeLabels $pad="4px 10px 0 8px" $ls={0.8}>
                    <span>16</span>
                    <span>24,105</span>
                  </RangeLabels>
                </LegendBody>
              </Card>

              <Card $h={160}>
                <LegendTitle>Resaltar end station name</LegendTitle>
                <SearchField>
                  Resaltar end station name
                  <svg width="18" height="18" viewBox="0 0 18 18" fill="none" stroke="#777" strokeWidth="2">
                    <circle cx="10.5" cy="7.5" r="5.6" />
                    <path d="M6.5 11.5L1 17" />
                  </svg>
                </SearchField>
              </Card>
            </LegendColumn>
          </ContentRow>
        </MainColumn>
      </Workspace>
    </>
  );
}
